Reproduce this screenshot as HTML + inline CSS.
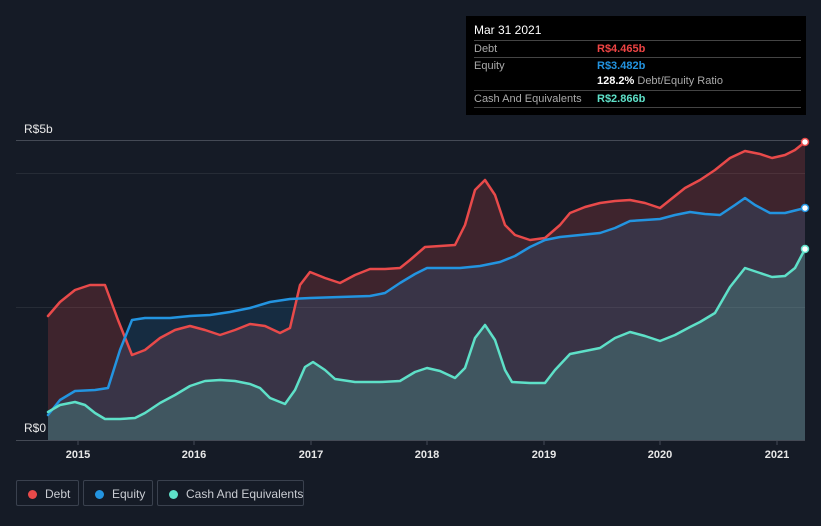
<!DOCTYPE html>
<html style="overflow:hidden"><head><style>
body{margin:0;width:821px;height:526px;background:#151b26;font-family:"Liberation Sans",sans-serif;overflow:hidden;position:relative}
.tt{position:absolute;left:466px;top:16px;width:340px;height:99px;background:#000;color:#fff;font-size:11px}
.row{position:absolute;left:8px;width:327px;border-top:1px solid #444;height:16px;line-height:16px}
.lab{color:#aaa}
.val{position:absolute;left:123px;top:0;font-weight:bold;white-space:nowrap}
.leg{position:absolute;top:480px;height:26px;border:1px solid #3a414e;border-radius:2px;color:#c9ccd2;font-size:12px;line-height:26px;box-sizing:border-box;white-space:nowrap}
.dot{position:absolute;left:11px;top:9px;width:9px;height:9px;border-radius:50%}
.leg span{position:absolute;left:28px;white-space:nowrap}
.ax{position:absolute;color:#e8e8e8;font-size:11px}
</style></head><body>
<div class="tt">
<div style="position:absolute;left:8px;top:7px;font-size:12px">Mar 31 2021</div>
<div class="row" style="top:24px"><span class="lab">Debt</span><span class="val" style="color:#ee4444">R$4.465b</span></div>
<div class="row" style="top:41px"><span class="lab">Equity</span><span class="val" style="color:#2394e0">R$3.482b</span></div>
<div class="row" style="top:57px;border:none"><span class="val">128.2% <span style="font-weight:normal;color:#aaa">Debt/Equity Ratio</span></span></div>
<div class="row" style="top:74px;border-bottom:1px solid #444"><span class="lab">Cash And Equivalents</span><span class="val" style="color:#5ee0c8">R$2.866b</span></div>
</div>
<div class="ax" style="left:24px;top:122px;font-size:12px">R$5b</div>
<div class="ax" style="left:24px;top:421px;font-size:12px">R$0</div>
<svg width="821" height="526" style="position:absolute;left:0;top:0" >
<line x1="16" y1="140.5" x2="805" y2="140.5" stroke="#444a55"/>
<line x1="16" y1="173.5" x2="805" y2="173.5" stroke="#262c36"/>
<line x1="16" y1="307.5" x2="805" y2="307.5" stroke="#262c36"/>
<g stroke-linejoin="round" stroke-linecap="round">
<polygon fill="#e84a4a" fill-opacity="0.2" points="48,440 48,316 60,302 75,290 90,285 105,285 118,320 132,355 145,350 160,338 175,330 190,326 205,330 220,335 235,330 250,324 265,326 280,333 290,328 300,285 310,272 325,278 340,283 355,275 370,269 385,269 400,268 410,260 425,247 440,246 455,245 465,225 475,190 485,180 495,195 505,225 515,235 530,240 545,238 560,225 570,213 585,207 600,203 615,201 630,200 645,203 660,208 670,200 685,188 700,180 715,170 730,158 745,151 760,154 772,158 785,155 795,150 805,142 805,440"/>
<polygon fill="#2394e0" fill-opacity="0.15" points="48,440 48,415 60,400 75,391 95,390 108,388 120,350 132,320 145,318 170,318 190,316 210,315 230,312 250,308 270,302 290,299 310,298 340,297 370,296 385,293 400,283 415,274 427,268 460,268 480,266 500,262 515,256 530,247 545,240 560,237 580,235 600,233 615,228 630,221 645,220 660,219 675,215 690,212 705,214 720,215 735,205 745,198 755,205 770,213 785,213 805,208 805,440"/>
<polygon fill="#5ee0c8" fill-opacity="0.2" points="48,440 48,412 60,405 75,402 85,405 95,413 105,419 120,419 135,418 145,413 160,403 175,395 190,386 205,381 220,380 235,381 250,384 260,388 270,398 285,404 295,390 305,367 313,362 325,370 335,379 355,382 380,382 400,381 415,372 427,368 440,371 455,378 465,368 475,338 485,325 495,340 505,370 512,382 530,383 545,383 555,370 570,354 585,351 600,348 615,338 630,332 645,336 660,341 675,335 690,327 700,322 715,313 730,287 745,268 760,273 772,277 785,276 795,268 805,249 805,440"/>
<polyline fill="none" stroke="#e84a4a" stroke-width="2.5" points="48,316 60,302 75,290 90,285 105,285 118,320 132,355 145,350 160,338 175,330 190,326 205,330 220,335 235,330 250,324 265,326 280,333 290,328 300,285 310,272 325,278 340,283 355,275 370,269 385,269 400,268 410,260 425,247 440,246 455,245 465,225 475,190 485,180 495,195 505,225 515,235 530,240 545,238 560,225 570,213 585,207 600,203 615,201 630,200 645,203 660,208 670,200 685,188 700,180 715,170 730,158 745,151 760,154 772,158 785,155 795,150 805,142"/>
<polyline fill="none" stroke="#2394e0" stroke-width="2.5" points="48,415 60,400 75,391 95,390 108,388 120,350 132,320 145,318 170,318 190,316 210,315 230,312 250,308 270,302 290,299 310,298 340,297 370,296 385,293 400,283 415,274 427,268 460,268 480,266 500,262 515,256 530,247 545,240 560,237 580,235 600,233 615,228 630,221 645,220 660,219 675,215 690,212 705,214 720,215 735,205 745,198 755,205 770,213 785,213 805,208"/>
<polyline fill="none" stroke="#5ee0c8" stroke-width="2.5" points="48,412 60,405 75,402 85,405 95,413 105,419 120,419 135,418 145,413 160,403 175,395 190,386 205,381 220,380 235,381 250,384 260,388 270,398 285,404 295,390 305,367 313,362 325,370 335,379 355,382 380,382 400,381 415,372 427,368 440,371 455,378 465,368 475,338 485,325 495,340 505,370 512,382 530,383 545,383 555,370 570,354 585,351 600,348 615,338 630,332 645,336 660,341 675,335 690,327 700,322 715,313 730,287 745,268 760,273 772,277 785,276 795,268 805,249"/>
</g>
<circle cx="805" cy="142" r="3.5" fill="#fff" stroke="#e84a4a" stroke-width="1.5"/>
<circle cx="805" cy="208" r="3.5" fill="#fff" stroke="#2394e0" stroke-width="1.5"/>
<circle cx="805" cy="249" r="3.5" fill="#fff" stroke="#5ee0c8" stroke-width="1.5"/>
<line x1="16" y1="440.5" x2="805" y2="440.5" stroke="#444a55"/>
<g stroke="#444a55"><line x1="78" y1="440" x2="78" y2="445"/><line x1="194" y1="440" x2="194" y2="445"/><line x1="311" y1="440" x2="311" y2="445"/><line x1="427" y1="440" x2="427" y2="445"/><line x1="544" y1="440" x2="544" y2="445"/><line x1="660" y1="440" x2="660" y2="445"/><line x1="777" y1="440" x2="777" y2="445"/></g>
<g fill="#e8e8e8" font-size="11" font-weight="bold" text-anchor="middle" font-family="Liberation Sans,sans-serif">
<text x="78" y="458">2015</text><text x="194" y="458">2016</text><text x="311" y="458">2017</text><text x="427" y="458">2018</text><text x="544" y="458">2019</text><text x="660" y="458">2020</text><text x="777" y="458">2021</text></g>
</svg>
<div class="leg" style="left:16px;width:63px"><div class="dot" style="background:#e84a4a"></div><span>Debt</span></div>
<div class="leg" style="left:83px;width:70px"><div class="dot" style="background:#2394e0"></div><span>Equity</span></div>
<div class="leg" style="left:157px;width:147px"><div class="dot" style="background:#5ee0c8"></div><span>Cash And Equivalents</span></div>
</body></html>
